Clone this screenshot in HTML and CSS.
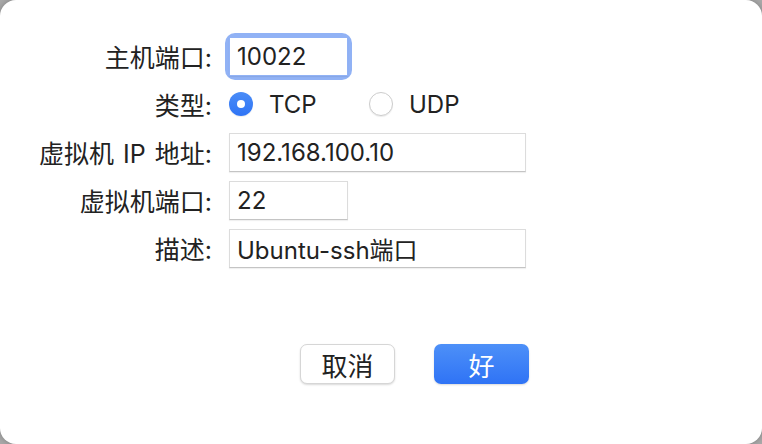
FILE: index.html
```html
<!DOCTYPE html>
<html lang="zh-CN">
<head>
    <meta charset="UTF-8">
    <title>端口转发</title>
    <link rel="stylesheet" href="styles.css">
</head>
<body>
    <div class="sheet">
        <div class="form">
            <label class="label">主机端口:</label>
            <div class="field-cell">
                <div class="focus-ring">
                    <input class="field short" type="text" value="10022">
                </div>
            </div>

            <label class="label">类型:</label>
            <div class="field-cell radios">
                <span class="radio checked"></span><span class="radio-text">TCP</span>
                <span class="radio"></span><span class="radio-text">UDP</span>
            </div>

            <label class="label">虚拟机 IP 地址:</label>
            <div class="field-cell">
                <input class="field long" type="text" value="192.168.100.10">
            </div>

            <label class="label">虚拟机端口:</label>
            <div class="field-cell">
                <input class="field short" type="text" value="22">
            </div>

            <label class="label">描述:</label>
            <div class="field-cell">
                <input class="field long" type="text" value="Ubuntu-ssh端口">
            </div>
        </div>

        <div class="buttons">
            <button class="btn">取消</button>
            <button class="btn primary">好</button>
        </div>
    </div>
</body>
</html>
```

FILE: styles.css
```css
html, body {
    margin: 0;
    padding: 0;
    height: 100%;
}

body {
    background: #a9a9a9;
    font-family: Inter, "Noto Sans CJK SC", sans-serif;
    color: #222;
}

.sheet {
    height: 100%;
    box-sizing: border-box;
    background: #fff;
    border-radius: 16px;
    padding-top: 32px;
    box-shadow: 0 0 6px rgba(0, 0, 0, 0.25);
}

.form {
    display: grid;
    grid-template-columns: 212px 1fr;
    grid-auto-rows: 48px;
    column-gap: 17px;
}

.label {
    font-size: 25px;
    word-spacing: 2px;
    display: flex;
    align-items: center;
    justify-content: flex-end;
    white-space: nowrap;
}

.field-cell {
    display: flex;
    align-items: center;
}

.field {
    box-sizing: border-box;
    height: 39px;
    border: 1px solid #dcdcdc;
    border-bottom-color: #c4c4c4;
    background: #fff;
    font-family: Inter, "Noto Sans CJK SC", sans-serif;
    font-size: 24px;
    color: #222;
    padding: 0 7px;
    outline: none;
    box-shadow: 0 1px 1px rgba(0, 0, 0, 0.06);
}

.short {
    width: 119px;
}

.long {
    width: 297px;
}

.focus-ring {
    display: flex;
    border-radius: 6px;
    box-shadow: 0 0 0 4px #91b2f5;
}

.focus-ring .field {
    border-color: #91b2f5;
}

.radio {
    box-sizing: border-box;
    width: 24px;
    height: 24px;
    border-radius: 50%;
    border: 1px solid #cdcdcd;
    background: #fff;
    box-shadow: 0 1px 1px rgba(0, 0, 0, 0.08);
    position: relative;
}

.radio.checked {
    border: none;
    background: linear-gradient(#4a8cf7, #2f74f5);
}

.radio.checked::after {
    content: "";
    position: absolute;
    left: 8px;
    top: 8px;
    width: 8px;
    height: 8px;
    border-radius: 50%;
    background: #fff;
}

.radio-text {
    font-size: 24px;
    margin-left: 16px;
    width: 100px;
}

.buttons {
    display: flex;
    gap: 39px;
    margin-top: 72px;
    padding-left: 300px;
}

.btn {
    width: 95px;
    height: 40px;
    border-radius: 7px;
    border: 1px solid #d6d6d6;
    background: #fff;
    font-family: Inter, "Noto Sans CJK SC", sans-serif;
    font-size: 26px;
    color: #222;
    box-shadow: 0 1px 2px rgba(0, 0, 0, 0.15);
    padding: 0;
}

.btn.primary {
    border: none;
    color: #fff;
    background: linear-gradient(#4d90f8, #2f73f5);
}
```
